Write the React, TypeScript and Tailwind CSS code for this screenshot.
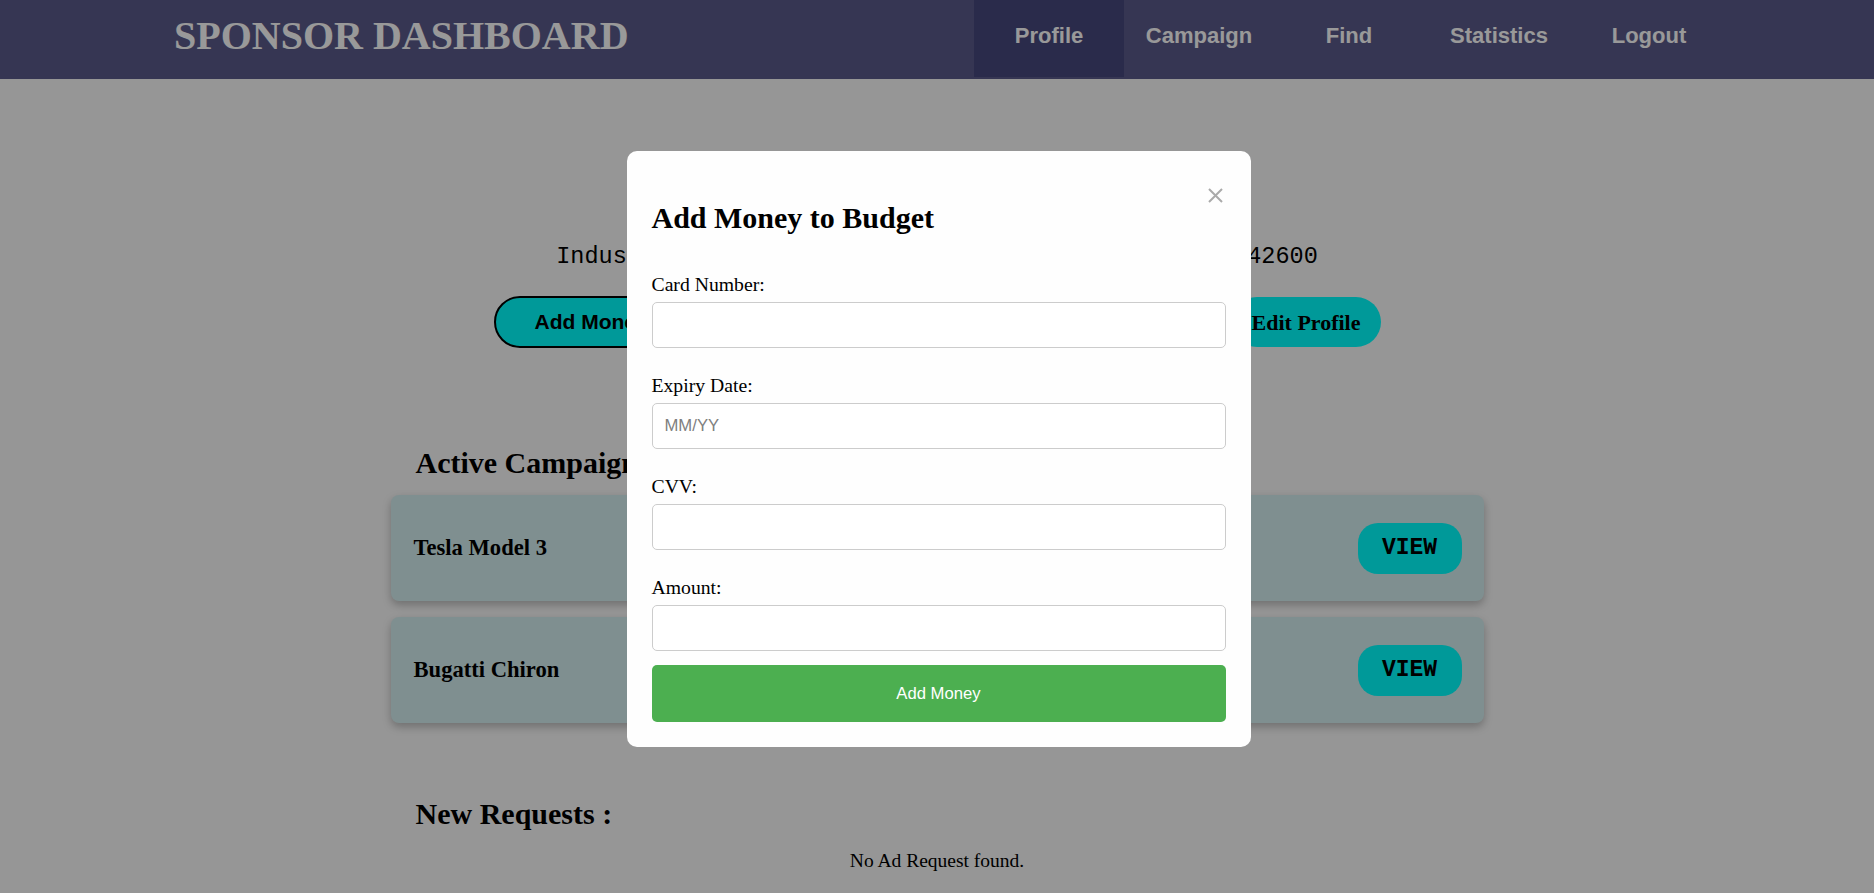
const links = ['Profile', 'Campaign', 'Find', 'Statistics', 'Logout']
const campaigns = ['Tesla Model 3', 'Bugatti Chiron']
const fields = [
  { label: 'Card Number:', placeholder: '' },
  { label: 'Expiry Date:', placeholder: 'MM/YY' },
  { label: 'CVV:', placeholder: '' },
  { label: 'Amount:', placeholder: '' },
]

function Navbar() {
  return (
    <nav className="flex h-[79px] items-start justify-between bg-[#5a5a8b] pl-[174px] pr-[150px]">
      <h1 className="mt-[13px] text-[40px] font-bold leading-[46px] text-white">SPONSOR DASHBOARD</h1>
      <ul className="flex">
        {links.map((link) => (
          <li key={link}>
            <a
              href="#"
              className={
                link === 'Profile'
                  ? "flex h-[77px] w-[150px] justify-center bg-[#47487e] pt-[23px] font-['Liberation_Sans',Arial,sans-serif] text-[22px] font-bold leading-[25px] text-white"
                  : "flex h-[77px] w-[150px] justify-center pt-[23px] font-['Liberation_Sans',Arial,sans-serif] text-[22px] font-bold leading-[25px] text-white"
              }
            >
              {link}
            </a>
          </li>
        ))}
      </ul>
    </nav>
  )
}

function AddMoneyModal() {
  return (
    <div className="fixed inset-0 z-10 flex items-start justify-center bg-black/40">
      <div className="relative ml-[3px] mt-[151px] w-[624px] rounded-[10px] bg-[#fefefe] p-[25px]">
        <button className="absolute right-[28px] top-[37px] h-[15px] w-[15px]">
          <svg viewBox="0 0 15 15" className="h-[15px] w-[15px]">
            <path d="M1 1 L14 14 M14 1 L1 14" stroke="#aaaaaa" strokeWidth="2" />
          </svg>
        </button>
        <h2 className="mt-[25px] text-[30px] font-bold leading-[34px]">Add Money to Budget</h2>
        <form className="mt-[38px] flex flex-col gap-[26px]">
          {fields.map((f) => (
            <div key={f.label} className="flex flex-col">
              <label className="mb-[6px] text-[19.7px] leading-[23px]">{f.label}</label>
              <input
                type="text"
                placeholder={f.placeholder}
                className="h-[46px] w-full rounded-[5px] border border-[#cccccc] bg-white px-[12px] font-['Liberation_Sans',Arial,sans-serif] text-[16.67px] placeholder:text-[#808080]"
              />
            </div>
          ))}
        </form>
        <button className="mt-[14px] flex h-[57px] w-full items-center justify-center rounded-[5px] bg-[#4caf50] font-['Liberation_Sans',Arial,sans-serif] text-[16.67px] text-white">
          Add Money
        </button>
      </div>
    </div>
  )
}

export default function App() {
  return (
    <div className="relative min-h-screen bg-[#fafafa] font-['Liberation_Serif','Times_New_Roman',serif] text-black">
      <Navbar />
      <main className="flex flex-col">
        <h2 className="mt-[90px] text-center text-[30px] font-bold leading-[35px]">Welcome, Tesla Inc.</h2>
        <p className="mt-[39px] whitespace-pre text-center font-['Liberation_Mono','Courier_New',monospace] text-[23.5px] leading-[28px]">
          Industry: Automobile       |       Budget: Rs. 1742600
        </p>
        <div className="mx-auto mt-[25px] flex w-[887px] items-center justify-between">
          <button className="h-[52px] rounded-full border-2 border-black bg-[#00ffff] px-[39px] font-['Liberation_Sans',Arial,sans-serif] text-[21px] font-bold">
            Add Money
          </button>
          <button className="h-[50px] rounded-full bg-[#00ffff] px-[20px] text-[22px] font-bold">
            Edit Profile
          </button>
        </div>

        <section className="mx-auto w-[1093px]">
          <h2 className="ml-[25px] mt-[97px] text-[30px] font-bold leading-[35px]">Active Campaigns :</h2>
          <div className="mt-[15px] flex flex-col gap-[16px]">
            {campaigns.map((c) => (
              <div
                key={c}
                className="flex h-[106px] items-center justify-between rounded-[8px] bg-[#d4eef0] pl-[23px] pr-[22px] shadow-[0_4px_8px_rgba(0,0,0,0.25)]"
              >
                <span className="text-[22.6px] font-bold">{c}</span>
                <button className="flex h-[51px] w-[104px] items-center justify-center rounded-[20px] bg-[#00ffff] font-['Liberation_Mono','Courier_New',monospace] text-[23px] font-bold">
                  VIEW
                </button>
              </div>
            ))}
          </div>
          <h2 className="ml-[25px] mt-[73px] text-[30px] font-bold leading-[35px]">New Requests :</h2>
          <p className="mt-[19px] text-center text-[19.5px] leading-[22px]">No Ad Request found.</p>
        </section>
      </main>
      <AddMoneyModal />
    </div>
  )
}
